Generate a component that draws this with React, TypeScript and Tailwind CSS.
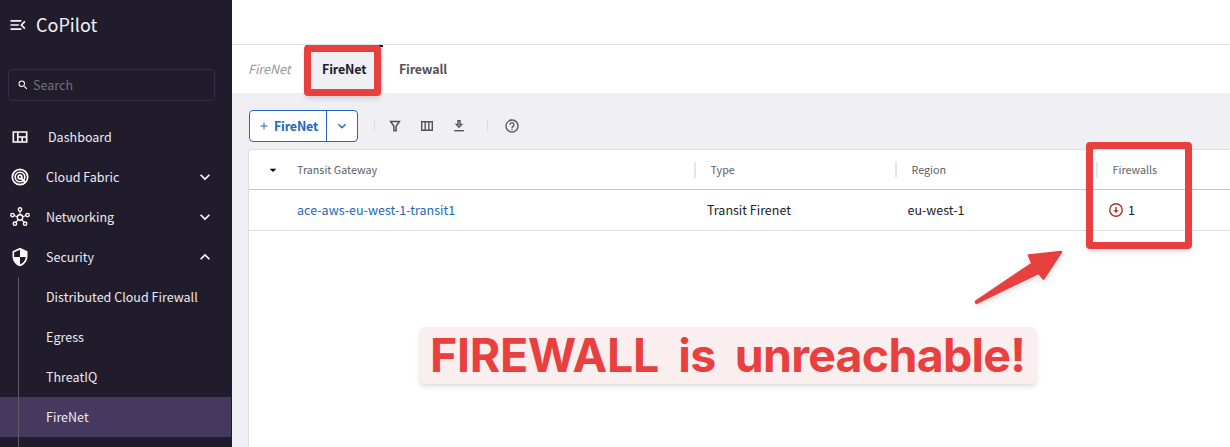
import type { ReactNode } from 'react';
import {
  MdMenuOpen,
  MdSearch,
  MdOutlineViewQuilt,
  MdSecurity,
  MdKeyboardArrowDown,
  MdKeyboardArrowUp,
  MdAdd,
  MdHelpOutline,
  MdArrowDropDown,
} from 'react-icons/md';

function RadarIcon() {
  return (
    <svg className="size-5" viewBox="0 0 20 20" fill="none" stroke="currentColor">
      <circle cx="10" cy="10" r="7.7" strokeWidth="1.7" />
      <circle cx="10" cy="10" r="4.8" strokeWidth="1.6" />
      <circle cx="10" cy="10" r="1.9" strokeWidth="1.7" />
      <path d="M10.5 10.5L15 15" strokeWidth="1.8" />
    </svg>
  );
}

function HubIcon() {
  return (
    <svg className="size-5" viewBox="0 0 20 20" fill="none" stroke="currentColor" strokeWidth="1.4">
      <circle cx="10" cy="10.5" r="2.7" />
      <circle cx="10" cy="2.5" r="1.7" />
      <circle cx="2.5" cy="8.1" r="1.7" />
      <circle cx="17.5" cy="8.1" r="1.7" />
      <circle cx="4.9" cy="16.7" r="1.7" />
      <circle cx="15.1" cy="16.700" r="1.7" />
      <path d="M10 4.200v3.600M4.100 8.600l3.300 1.100M15.900 8.600l-3.300 1.100M5.900 15.300l2.400-2.700M14.100 15.300l-2.400-2.700" strokeWidth="1.1" />
    </svg>
  );
}

function FilterIcon() {
  return (
    <svg className="size-4" viewBox="0 0 16 16" fill="none" stroke="currentColor" strokeWidth="1.5">
      <path d="M3.6 3.5h8.8L9.1 8.2v4.5H6.9V8.2z" />
    </svg>
  );
}

function ColumnsIcon() {
  return (
    <svg className="size-4" viewBox="0 0 16 16" fill="none" stroke="currentColor" strokeWidth="1.4">
      <path d="M2.7 3.7h10.6v8.6H2.7zM6.2 3.7v8.6M9.8 3.7v8.6" />
    </svg>
  );
}

function DownloadIcon() {
  return (
    <svg className="size-4" viewBox="0 0 16 16" fill="none" stroke="currentColor" strokeWidth="1.4">
      <path d="M7 2.7h2v3.8h1.6L8 9.2 5.4 6.5H7z" />
      <path d="M3.2 12.7h9.6" />
    </svg>
  );
}

function Section({ icon, label, open }: { icon: ReactNode; label: string; open?: boolean }) {
  return (
    <div className="flex h-10 shrink-0 items-center pr-[17px] pl-[10px] text-white">
      <span className="w-9 shrink-0">{icon}</span>
      <span className="grow text-[#edeaf2]">{label}</span>
      {open ? <MdKeyboardArrowUp className="size-5" /> : <MdKeyboardArrowDown className="size-5" />}
    </div>
  );
}

function Sidebar() {
  const items = ['Distributed Cloud Firewall', 'Egress', 'ThreatIQ', 'FireNet'];
  return (
    <aside className="flex h-full w-[232px] shrink-0 flex-col bg-[#201c2b] text-[12.5px] leading-5 tracking-[0.02px] text-[#edeaf2]">
      <div className="flex h-[50px] shrink-0 items-center gap-2 pl-2 text-[#f4f2f7]">
        <MdMenuOpen className="size-5" />
        <span className="-mt-0.5 text-[18px] leading-6">CoPilot</span>
      </div>
      <div className="mt-[19px] ml-2 flex h-8 w-[207px] shrink-0 items-center gap-1 rounded border border-[#332c4a] pl-2">
        <MdSearch className="size-3 text-white" />
        <span className="text-[#74707c]">Search</span>
      </div>
      <div className="mt-4 flex h-10 shrink-0 items-center pl-[10px]">
        <span className="w-[38px] text-white"><MdOutlineViewQuilt className="size-5" /></span>
        Dashboard
      </div>
      <Section icon={<RadarIcon />} label="Cloud Fabric" />
      <Section icon={<HubIcon />} label="Networking" />
      <Section icon={<MdSecurity className="size-5" />} label="Security" open />
      <div className="h-[170px] shrink-0 overflow-hidden">
        {items.map((item) => (
          <div key={item} className={item === 'FireNet' ? 'mr-px h-10 bg-[#46395f] pl-[18px]' : 'h-10 pl-[18px]'}>
            <div className="flex h-full items-center border-l border-[#5d5965] pl-[27px]">{item}</div>
          </div>
        ))}
        <div className="ml-[18px] h-10 border-l border-[#5d5965]" />
      </div>
    </aside>
  );
}

function Tabs() {
  return (
    <nav className="flex h-[49px] shrink-0 border-t border-[#e2e1e6] bg-white text-[12.5px] leading-5">
      <span className="flex w-[74px] items-center pl-4 text-[#97959c] italic">FireNet</span>
      <div className="relative flex w-[77px] items-center border-t-2 border-[#16121f] bg-[#f0eff4] pb-0.5 pl-4 font-bold tracking-[-0.15px] text-[#201c2b]">
        FireNet
        <div className="absolute -top-[2px] -left-[2px] h-[51px] w-[77px] rounded-[4px] border-[7px] border-[#e8403f] shadow-md" />
      </div>
      <span className="flex items-center pl-4 font-bold tracking-[-0.2px] text-[#55525c]">Firewall</span>
    </nav>
  );
}

function Toolbar() {
  return (
    <div className="flex h-14 shrink-0 items-center pt-[10px] pl-[17px] text-[#55525c]">
      <div className="flex h-8 w-[109px] rounded border border-[#2168be] bg-white text-[12.5px] font-bold tracking-[-0.2px] text-[#2168be]">
        <div className="flex w-[77px] items-center gap-1 border-r border-[#2168be] pl-2">
          <MdAdd className="size-3" />
          FireNet
        </div>
        <div className="flex grow items-center justify-center"><MdKeyboardArrowDown className="size-4" /></div>
      </div>
      <div className="ml-4 h-3 w-px bg-[#dddce3]" />
      <div className="ml-3 flex gap-4">
        <FilterIcon />
        <ColumnsIcon />
        <DownloadIcon />
      </div>
      <div className="ml-5 h-3 w-px bg-[#dddce3]" />
      <MdHelpOutline className="ml-4 size-4" />
    </div>
  );
}

function HeaderCell({ children }: { children: ReactNode }) {
  return (
    <div className="flex h-4 items-center border-l-2 border-[#e6e5ee] pl-[14.5px]">{children}</div>
  );
}

function Table() {
  return (
    <div className="ml-4 grow rounded-tl border-t border-l border-[#dfdee5] bg-white">
      <div className="grid h-10 grid-cols-[445px_201px_201px_1fr] items-center border-b border-[#c7c6cb] text-[10.75px] leading-4 text-[#625f68]">
        <div className="flex items-center pl-4">
          <MdArrowDropDown className="mr-4 size-4 text-black" />
          Transit Gateway
        </div>
        <HeaderCell>Type</HeaderCell>
        <HeaderCell>Region</HeaderCell>
        <HeaderCell>Firewalls</HeaderCell>
      </div>
      <div className="grid h-[41px] grid-cols-[445px_201px_200px_1fr] items-center border-b border-[#e0dfe5] text-[12.5px] leading-5 text-[#201c2b]">
        <div className="pl-12 tracking-[0.02px] text-[#2168be]">ace-aws-eu-west-1-transit1</div>
        <div className="pl-[13px]">Transit Firenet</div>
        <div className="pl-[12.5px]">eu-west-1</div>
        <div className="flex items-center gap-1 pl-[13px]">
          <svg className="size-4" viewBox="0 0 16 16" fill="none">
            <circle cx="8" cy="8" r="6.2" stroke="#a93226" strokeWidth="1.4" />
            <path d="M7.3 5h1.4v3.3h2L8 11 5.3 8.3h2z" fill="#a93226" />
          </svg>
          1
        </div>
      </div>
    </div>
  );
}

function Annotations() {
  return (
    <>
      <div className="absolute top-[142px] left-[1086px] h-[107px] w-[106px] rounded-[4px] border-[7px] border-[#e8403f] shadow-md" />
      <svg className="absolute top-[235px] left-[960px] h-20 w-[120px] drop-shadow-md" viewBox="0 0 120 80">
        <path
          d="M16 66.5L72.5 28.5 69 20.5 101 17 83.5 43.5 78.5 37.8 16.5 68z"
          fill="#e8403f"
          stroke="#e8403f"
          strokeWidth="2.5"
          strokeLinejoin="round"
        />
      </svg>
      <div className="absolute top-[327px] left-[419px] flex h-[57px] w-[618px] items-start rounded-md bg-[#fbeeee] pl-[11px] font-['Inter',sans-serif] text-[46.5px] leading-[56px] font-bold tracking-[-0.3px] [word-spacing:-0.6px] whitespace-pre text-[#e8403f] shadow-md">
        FIREWALL<span className="tracking-[-0.75px]">{'  is  unreachable!'}</span>
      </div>
    </>
  );
}

export default function App() {
  return (
    <div className="relative flex h-[447px] w-[1230px] overflow-hidden bg-[#f0eff4] font-['Noto_Sans_CJK_SC',sans-serif]">
      <Sidebar />
      <main className="flex grow flex-col">
        <header className="h-11 shrink-0 bg-white" />
        <Tabs />
        <Toolbar />
        <Table />
      </main>
      <Annotations />
    </div>
  );
}
